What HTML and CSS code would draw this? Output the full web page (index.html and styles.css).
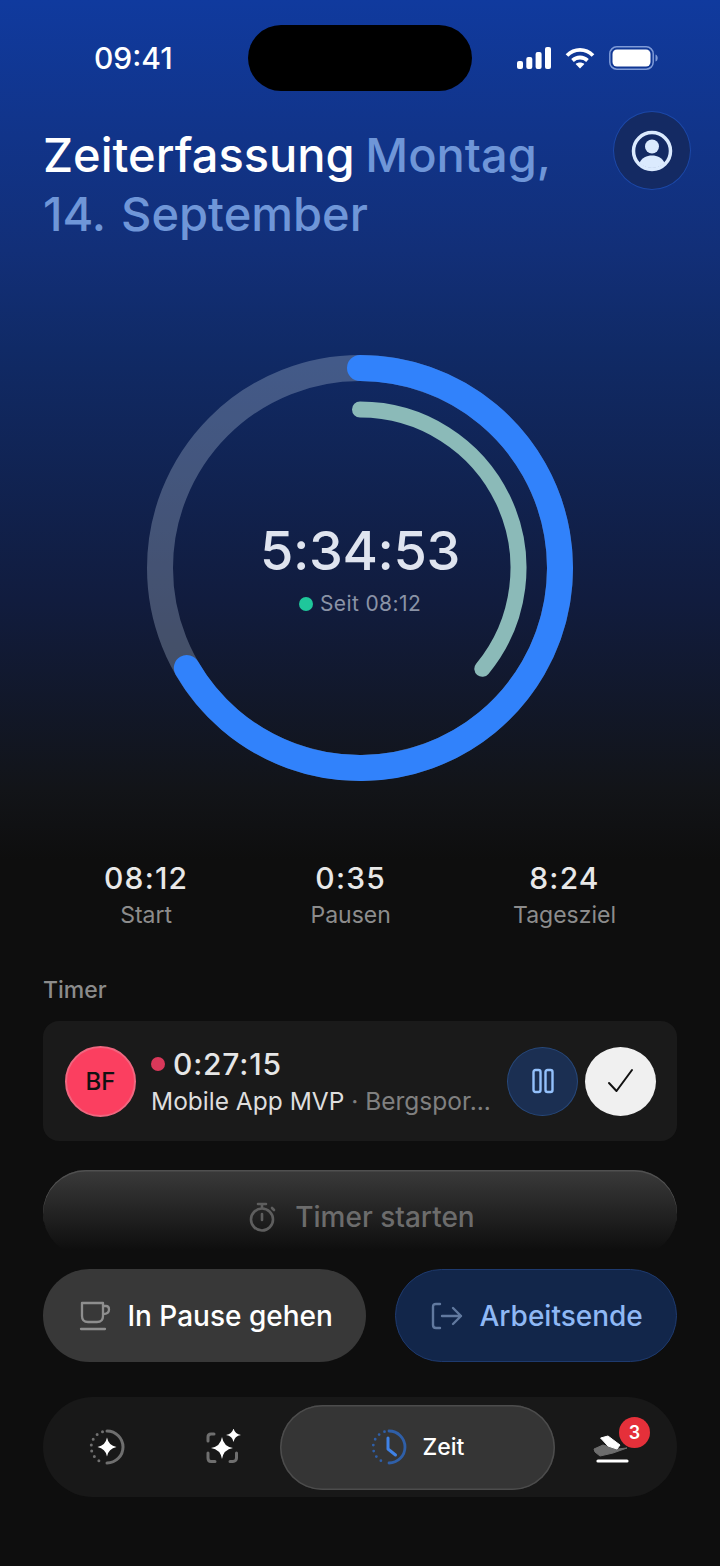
FILE: index.html
```html
<!DOCTYPE html>
<html lang="de">
<head>
<meta charset="utf-8">
<title>Zeiterfassung</title>
<link rel="stylesheet" href="styles.css">
</head>
<body>
<main class="page">
  <div class="status">
    <span class="clock">09:41</span>
    <div class="island"></div>
    <div class="status-icons">
      <svg class="sig" width="34" height="22" viewBox="0 0 34 22" fill="#fff"><rect x="0" y="14" width="6" height="8" rx="2"/><rect x="9.300" y="10" width="6" height="12" rx="2"/><rect x="18.600" y="5" width="6" height="17" rx="2"/><rect x="28" y="0" width="6" height="22" rx="2"/></svg>
      <svg width="30" height="22" viewBox="0 0 30 22" fill="none" stroke="#fff" stroke-width="3.800"><path d="M2 8.500C9.500 1 20.500 1 28 8.500"/><path d="M7.500 13.500C11.800 9.500 18.200 9.500 22.500 13.500"/><path d="M15 21.500L10.600 16.900C13 14.900 17 14.900 19.400 16.900Z" fill="#fff" stroke="none"/></svg>
      <svg width="49" height="24" viewBox="0 0 49 24" fill="none"><rect x="0.800" y="0.800" width="43.400" height="22.400" rx="7" stroke="#7f9bd8" stroke-width="1.500"/><rect x="3.500" y="3.500" width="38" height="17" rx="4.500" fill="#fff"/><path d="M46.500 8.500C48 9 48.700 10.500 48.700 12S48 15 46.500 15.500Z" fill="#7f9bd8"/></svg>
    </div>
  </div>

  <header class="head">
    <h1 class="title">Zeiterfassung <span class="date">Montag, 14. September</span></h1>
    <div class="profile">
      <svg width="42" height="42" viewBox="0 0 42 42" fill="none"><circle cx="21" cy="21" r="18.500" stroke="#dbeafe" stroke-width="3.500"/><circle cx="21" cy="16.500" r="7" fill="#dbeafe"/><path d="M8.500 33C11 27.500 15.500 25.500 21 25.500S31 27.500 33.500 33C30 36.500 26 38 21 38S12 36.500 8.500 33Z" fill="#dbeafe"/></svg>
    </div>
  </header>

  <section class="gauge">
    <svg class="gauge-svg" width="440" height="440" viewBox="0 0 440 440" fill="none">
      <circle cx="220" cy="220" r="200" stroke="#a8b8d0" stroke-opacity=".34" stroke-width="26"/>
      <path d="M220 20A200 200 0 1 1 46.800 320" stroke="#3182fb" stroke-width="26" stroke-linecap="round"/>
      <path d="M220 61.500A158.500 158.500 0 0 1 342.300 320.800" stroke="#8bbab8" stroke-width="16" stroke-linecap="round"/>
    </svg>
    <div class="gauge-center">
      <div class="elapsed">5:34:53</div>
      <div class="since"><i class="green"></i>Seit 08:12</div>
    </div>
  </section>

  <section class="stats">
    <div class="stat"><strong>08:12</strong><span>Start</span></div>
    <div class="stat"><strong>0:35</strong><span>Pausen</span></div>
    <div class="stat"><strong>8:24</strong><span>Tagesziel</span></div>
  </section>

  <div class="label">Timer</div>

  <section class="card">
    <div class="avatar">BF</div>
    <div class="timer-info">
      <div class="timer-time"><i class="red"></i>0:27:15</div>
      <div class="timer-name">Mobile App MVP <span>· Bergspor...</span></div>
    </div>
    <div class="round pause">
      <svg width="22" height="26" viewBox="0 0 22 26" fill="none" stroke="#93c0fb" stroke-width="2.400"><rect x="1.500" y="2" width="7" height="22" rx="2"/><rect x="13.500" y="2" width="7" height="22" rx="2"/></svg>
    </div>
    <div class="round done">
      <svg width="30" height="28" viewBox="0 0 30 28" fill="none" stroke="#111" stroke-width="2" stroke-linecap="round" stroke-linejoin="round"><path d="M3 16L10.500 24L26 3"/></svg>
    </div>
  </section>

  <div class="start">
    <svg width="28" height="30" viewBox="0 0 28 30" fill="none" stroke="#5e5e5e" stroke-width="2.600" stroke-linecap="round"><circle cx="13" cy="17.500" r="11"/><path d="M9 2H17M13 2V6M13 12V18M23 6L25 8"/></svg>
    <span>Timer starten</span>
  </div>

  <div class="actions">
    <div class="action brk">
      <svg width="32" height="30" viewBox="0 0 32 30" fill="none" stroke="#8e8e8e" stroke-width="2.300" stroke-linecap="round" stroke-linejoin="round"><path d="M3 2H24V15C24 19 22 21 18 21H9C5 21 3 19 3 15Z"/><path d="M24 5H27C29 5 30 6.500 30 8.500C30 11 28 13 24 13"/><path d="M2 28H26" /></svg>
      <span>In Pause gehen</span>
    </div>
    <div class="action end">
      <svg width="32" height="28" viewBox="0 0 32 28" fill="none" stroke="#61799f" stroke-width="2.400" stroke-linecap="round" stroke-linejoin="round"><path d="M9 2H5C3 2 2 3 2 5V23C2 25 3 26 5 26H9"/><path d="M11 14H30M22 6L30 14L22 22"/></svg>
      <span>Arbeitsende</span>
    </div>
  </div>

  <nav class="nav">
    <div class="nav-item first">
      <svg width="36" height="36" viewBox="0 0 36 36" fill="none"><path d="M18 2A16 16 0 0 1 18 34" stroke="#6f6f6f" stroke-width="3" stroke-linecap="round"/><path d="M13.500 2.700A16 16 0 0 0 13.500 33.300" stroke="#6f6f6f" stroke-width="3" stroke-linecap="round" stroke-dasharray="0 6.100"/><path d="M18 8.500Q19.500 16.500 27.500 18Q19.500 19.500 18 27.500Q16.500 19.500 8.500 18Q16.500 16.500 18 8.500Z" fill="#fff"/></svg>
    </div>
    <div class="nav-item second">
      <svg width="36" height="36" viewBox="0 0 36 36" fill="none"><path d="M8 5H5C3 5 2 6 2 8V12M2 24V29C2 31 3 32.500 5 32.500H9M24 32.500H27C29 32.500 30.500 31 30.500 29V24" stroke="#6f6f6f" stroke-width="3" stroke-linecap="round"/><path d="M16 8Q17.500 17.500 27 19Q17.500 20.500 16 30Q14.500 20.500 5 19Q14.500 17.500 16 8Z" fill="#fff"/><path d="M27.500 -1Q28.500 5 35 6Q28.500 7 27.500 13Q26.500 7 20 6Q26.500 5 27.500 -1Z" fill="#fff"/></svg>
    </div>
    <div class="nav-pill">
      <svg width="36" height="36" viewBox="0 0 36 36" fill="none"><path d="M18 2A16 16 0 0 1 18 34" stroke="#2f5fa8" stroke-width="2.800" stroke-linecap="round"/><path d="M13.500 2.700A16 16 0 0 0 13.500 33.300" stroke="#2f5fa8" stroke-width="2.800" stroke-linecap="round" stroke-dasharray="0 6.100"/><path d="M17 9V20L24.500 26" stroke="#3f82e6" stroke-width="3" stroke-linecap="round" stroke-linejoin="round"/></svg>
      <span>Zeit</span>
    </div>
    <div class="nav-item last">
      <svg width="36" height="34" viewBox="0 0 36 34" fill="none"><path d="M5 30H34" stroke="#fff" stroke-width="3.200" stroke-linecap="round"/><path d="M1 18L10 14L24 18L34 17L20 22L7 25L2 21Z" fill="#6d6d6d" stroke="#6d6d6d" stroke-linejoin="round"/><path d="M7.600 7L15 5L27 14L24 18L15 15Z" fill="#fff" stroke="#fff" stroke-linejoin="round"/></svg>
      <b class="badge">3</b>
    </div>
  </nav>
</main>
</body>
</html>
```
FILE: styles.css
```css
* { box-sizing: border-box; }
html, body { margin: 0; padding: 0; background: #0e0e0e; }
body { font-family: Inter, "Liberation Sans", sans-serif; color: #fff; }
.page {
  width: 720px;
  height: 1566px;
  overflow: hidden;
  padding-top: 25px;
  background: linear-gradient(180deg, #103a9e 0, #122f78 250px, #102a66 350px, #111c3e 600px, #121418 790px, #0e0e0e 860px);
}
.status { display: flex; align-items: center; height: 66px; padding: 0 64px 0 94px; }
.clock { flex: none; width: 154px; font-size: 30px; font-weight: 500; line-height: 66px; }
.island { flex: none; width: 224px; height: 66px; border-radius: 33px; background: #000; }
.status-icons { display: flex; align-items: center; gap: 14px; margin-left: 45px; }
.head { display: flex; justify-content: space-between; align-items: flex-start; padding: 34px 29px 0 43px; }
.title { width: 540px; margin: 0; font-size: 47px; line-height: 59px; font-weight: 500; }
.date { margin-left: -2px; color: #6f96d8; word-spacing: 3px; }
.profile {
  display: flex; align-items: center; justify-content: center;
  width: 78px; height: 79px; margin-top: -14px; border-radius: 50%;
  background: #142a63; border: 1.500px solid #1c48a8;
}
.gauge { position: relative; width: 440px; height: 440px; margin: 105px auto 0; }
.gauge-svg { display: block; }
.gauge-center { position: absolute; inset: 0; display: flex; flex-direction: column; align-items: center; justify-content: center; }
.elapsed { font-size: 54px; line-height: 64px; font-weight: 500; color: #dfe4ef; letter-spacing: -.4px; margin-top: 1px; }
.since { display: flex; align-items: center; gap: 7px; margin-top: 7px; font-size: 21px; line-height: 28px; color: #8a93a6; letter-spacing: .4px; }
.green { width: 14px; height: 14px; border-radius: 50%; background: #1fc79b; }
.stats { display: flex; justify-content: space-between; padding: 0 104px; margin-top: 72px; }
.stat { display: flex; flex-direction: column; align-items: center; }
.stat strong { font-size: 30px; line-height: 36px; font-weight: 500; color: #e8e8e8; letter-spacing: 1.200px; }
.stat span { font-size: 23px; line-height: 32px; color: #8c8c8c; margin-top: 3px; }
.label { margin: 43px 0 0 43px; font-size: 23px; line-height: 32px; font-weight: 500; color: #8b8b8b; }
.card {
  display: flex; align-items: center;
  height: 120px; margin: 15px 43px 0; padding: 0 21px 0 22px;
  border-radius: 16px; background: #1a1a1a;
}
.avatar {
  display: flex; align-items: center; justify-content: center; flex: none;
  width: 71px; height: 71px; border-radius: 50%;
  background: #fb3f60; border: 2px solid #f0667f;
  color: #111; font-size: 24px; font-weight: 500;
}
.timer-info { flex: 1; min-width: 0; margin-left: 15px; }
.timer-time { display: flex; align-items: center; gap: 8px; font-size: 30px; line-height: 36px; font-weight: 500; color: #e6e6e6; letter-spacing: .8px; }
.red { width: 14px; height: 14px; border-radius: 50%; background: #d9385a; }
.timer-name { margin-top: 3px; font-size: 24.500px; line-height: 32px; color: #dedede; white-space: nowrap; }
.timer-name span { color: #808080; }
.round { display: flex; align-items: center; justify-content: center; flex: none; width: 71px; height: 69px; border-radius: 50%; }
.pause { background: #1b2f52; border: 1.500px solid #27487a; }
.done { margin-left: 7px; background: #f0f0f0; }
.start {
  display: flex; align-items: center; justify-content: center; gap: 18px;
  height: 86px; margin: 29px 43px -6px; padding: 8px 0 0 4px; border-radius: 43px;
  background: linear-gradient(180deg, #3a3a3a 0, #232323 42px, #0e0e0e 80px);
  box-shadow: inset 0 1.500px 0 #505050;
  font-size: 28px; font-weight: 500; color: #6c6c6c;
}
.actions { display: flex; gap: 29px; margin: 19px 43px 0; }
.action {
  display: flex; align-items: center; justify-content: center; gap: 16px;
  height: 93px; border-radius: 46.500px; font-size: 28px; font-weight: 500;
}
.brk { flex: 324 0 0; padding-left: 3px; background: #383838; color: #fff; }
.end { flex: 281 0 0; padding-left: 2px; background: #12264a; border: 1.500px solid #1e3a6e; color: #8fb8f5; }
.nav {
  position: relative;
  display: flex; align-items: center;
  height: 100px; margin: 35px 43px 0; border-radius: 50px; background: #181818;
}
.nav-item { position: relative; display: flex; justify-content: center; flex: none; }
.first { width: 36px; margin-left: 46px; }
.second { width: 36px; margin-left: 81px; }
.nav-pill {
  display: flex; align-items: center; justify-content: center; gap: 16px;
  width: 275px; height: 85px; margin-left: 38px;
  border-radius: 42.500px; background: #353535; box-shadow: inset 0 0 0 1.500px #4c4c4c;
  font-size: 23px; font-weight: 500;
}
.last { width: 36px; margin-left: 38px; margin-top: 2px; }
.badge {
  position: absolute; top: -14px; left: 26px;
  display: flex; align-items: center; justify-content: center;
  width: 31px; height: 31px; border-radius: 50%;
  background: #e5303a; color: #fff; font-size: 18px; font-weight: 600;
}
```
